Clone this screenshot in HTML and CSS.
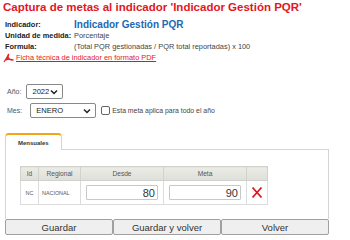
FILE: index.html
```html
<!DOCTYPE html>
<html lang="es">
<head>
  <meta charset="UTF-8">
  <title>Captura de metas</title>
  <link rel="stylesheet" href="styles.css">
</head>
<body>
  <h1 class="title">Captura de metas al indicador 'Indicador Gestión PQR'</h1>

  <div class="info">
    <span class="label">Indicador:</span>
    <span class="value big">Indicador Gestión PQR</span>
    <span class="label">Unidad de medida:</span>
    <span class="value">Porcentaje</span>
    <span class="label">Formula:</span>
    <span class="value">(Total PQR gestionadas / PQR total reportadas) x 100</span>
  </div>
  <a class="pdf-link" href="#">
    <svg width="11" height="10" viewBox="0 0 11 10">
      <!-- acrobat style glyph -->
      <path d="M1 9 C3 6 5 3 5.5 1 C6 3 5 5 3 7 C5 6 8 6 10 7 C8 7.5 6 6 5 4" fill="none" stroke="#e0262b" stroke-width="1.2"/>
    </svg>
    <span>Ficha técnica de indicador en formato PDF</span>
  </a>

  <div class="form">
    <div class="form-row">
      <span class="form-label">Año:</span>
      <div class="select year">
        <span>2022</span>
        <svg width="8" height="6" viewBox="0 0 8 6"><path d="M1 1.5 L4 4.5 L7 1.5" fill="none" stroke="#222" stroke-width="1.5"/></svg>
      </div>
    </div>
    <div class="form-row">
      <span class="form-label">Mes:</span>
      <div class="select month">
        <span>ENERO</span>
        <svg width="8" height="6" viewBox="0 0 8 6"><path d="M1 1.5 L4 4.5 L7 1.5" fill="none" stroke="#222" stroke-width="1.5"/></svg>
      </div>
      <span class="check"></span>
      <span class="check-text">Esta meta aplica para todo el año</span>
    </div>
  </div>

  <div class="tabs">
    <div class="tab">Mensuales</div>
    <div class="tab-rest"></div>
  </div>
  <div class="panel">
    <table class="goals">
      <colgroup>
        <col class="w-id">
        <col class="w-reg">
        <col class="w-num">
        <col class="w-num">
        <col class="w-del">
      </colgroup>
      <thead>
        <tr>
          <th>Id</th>
          <th>Regional</th>
          <th>Desde</th>
          <th>Meta</th>
          <th></th>
        </tr>
      </thead>
      <tbody>
        <tr>
          <td class="c-id">NC</td>
          <td class="c-reg">NACIONAL</td>
          <td class="c-num"><div class="num-input">80</div></td>
          <td class="c-num"><div class="num-input">90</div></td>
          <td class="c-del">
            <svg width="12" height="13" viewBox="0 0 12 13"><path d="M1.5 1.5 L10.5 11.5 M10.5 1.5 L1.5 11.5" stroke="#e0141b" stroke-width="1.8"/></svg>
          </td>
        </tr>
      </tbody>
    </table>
  </div>

  <div class="actions">
    <button class="btn">Guardar</button>
    <button class="btn">Guardar y volver</button>
    <button class="btn">Volver</button>
  </div>
</body>
</html>
```

FILE: styles.css
```css
body {
  margin: 0;
  width: 350px;
  font-family: "Liberation Sans", Arial, sans-serif;
  color: #333;
  background: #fff;
}
.title {
  margin: 0;
  padding-left: 3px;
  font-size: 11.5px;
  line-height: 14px;
  font-weight: bold;
  color: #e3161e;
  white-space: nowrap;
}
.info {
  display: grid;
  grid-template-columns: 69px auto;
  grid-auto-rows: 11px;
  grid-template-rows: 12px;
  margin: 4px 0 0 5px;
  align-items: center;
}
.label {
  font-size: 7.4px;
  font-weight: bold;
  color: #222;
}
.value {
  font-size: 7.4px;
  color: #444;
  white-space: nowrap;
}
.value.big {
  font-size: 10px;
  font-weight: bold;
  color: #2168b3;
}
.pdf-link {
  display: flex;
  align-items: center;
  gap: 2px;
  height: 11px;
  margin-left: 3px;
  font-size: 7.4px;
  color: #e3161e;
}
.form {
  display: flex;
  flex-direction: column;
  gap: 4px;
  margin: 21px 0 0 7px;
}
.form-row {
  display: flex;
  align-items: center;
  height: 15px;
}
.form-label {
  font-size: 7px;
  color: #555;
}
.select {
  display: flex;
  align-items: center;
  justify-content: space-between;
  height: 15px;
  box-sizing: border-box;
  border: 1px solid #888;
  border-radius: 2px;
  padding: 0 4px 0 5px;
  font-size: 7.6px;
  color: #222;
}
.select.year {
  width: 37px;
  margin-left: 5px;
}
.select.month {
  width: 66px;
  margin-left: 8px;
}
.check {
  width: 9px;
  height: 9px;
  box-sizing: border-box;
  border: 1px solid #666;
  border-radius: 2px;
  margin-left: 5px;
}
.check-text {
  margin-left: 2px;
  font-size: 6.9px;
  color: #444;
}
.tabs {
  display: flex;
  align-items: flex-end;
  margin: 15px 21px 0 5px;
}
.tab {
  width: 57px;
  height: 17px;
  box-sizing: border-box;
  border: 1px solid #d4d4d4;
  border-top: 2px solid #f2a516;
  border-bottom: none;
  border-radius: 4px 4px 0 0;
  padding: 5px 0 0 12px;
  font-size: 6px;
  font-weight: bold;
  color: #333;
  background: #fff;
}
.tab-rest {
  flex: 1;
  border-bottom: 1px solid #d4d4d4;
}
.panel {
  height: 69px;
  box-sizing: border-box;
  margin: 0 21px 0 5px;
  padding: 16px 0 0 14px;
  border: 1px solid #d4d4d4;
  border-top: none;
  border-bottom: none;
}
.goals {
  width: 247px;
  table-layout: fixed;
  border-collapse: collapse;
  border: 1px solid #cfcfcf;
  font-size: 6.6px;
  color: #555;
}
.w-id { width: 18px; }
.w-reg { width: 42px; }
.w-num { width: 83px; }
.w-del { width: 21px; }
.goals th {
  height: 13px;
  padding: 0;
  font-weight: normal;
  background: linear-gradient(#ececE6, #dededa);
  border: 1px solid #d2d2cc;
}
.goals td {
  height: 23px;
  padding: 0;
  border: 1px solid #dcdcdc;
  white-space: nowrap;
}
.goals td.c-id { text-align: center; font-size: 5.4px; }
.goals td.c-reg { padding-left: 3px; font-size: 5.4px; }
.goals td.c-num { padding: 0 5px; }
.goals td.c-del svg { display: block; margin: 0 auto; }
.num-input {
  height: 15px;
  box-sizing: border-box;
  border: 1px solid #c8c8c8;
  border-radius: 1px;
  padding-right: 2px;
  text-align: right;
  font-size: 11px;
  line-height: 14px;
  color: #333;
}
.actions {
  display: flex;
  margin: 0 21px 0 5px;
}
.btn {
  flex: 1;
  height: 16px;
  padding: 0;
  border: 1px solid #a0a0a0;
  border-radius: 2px;
  background: #efefef;
  font-family: "Liberation Sans", Arial, sans-serif;
  font-size: 9.5px;
  color: #333;
}
```
